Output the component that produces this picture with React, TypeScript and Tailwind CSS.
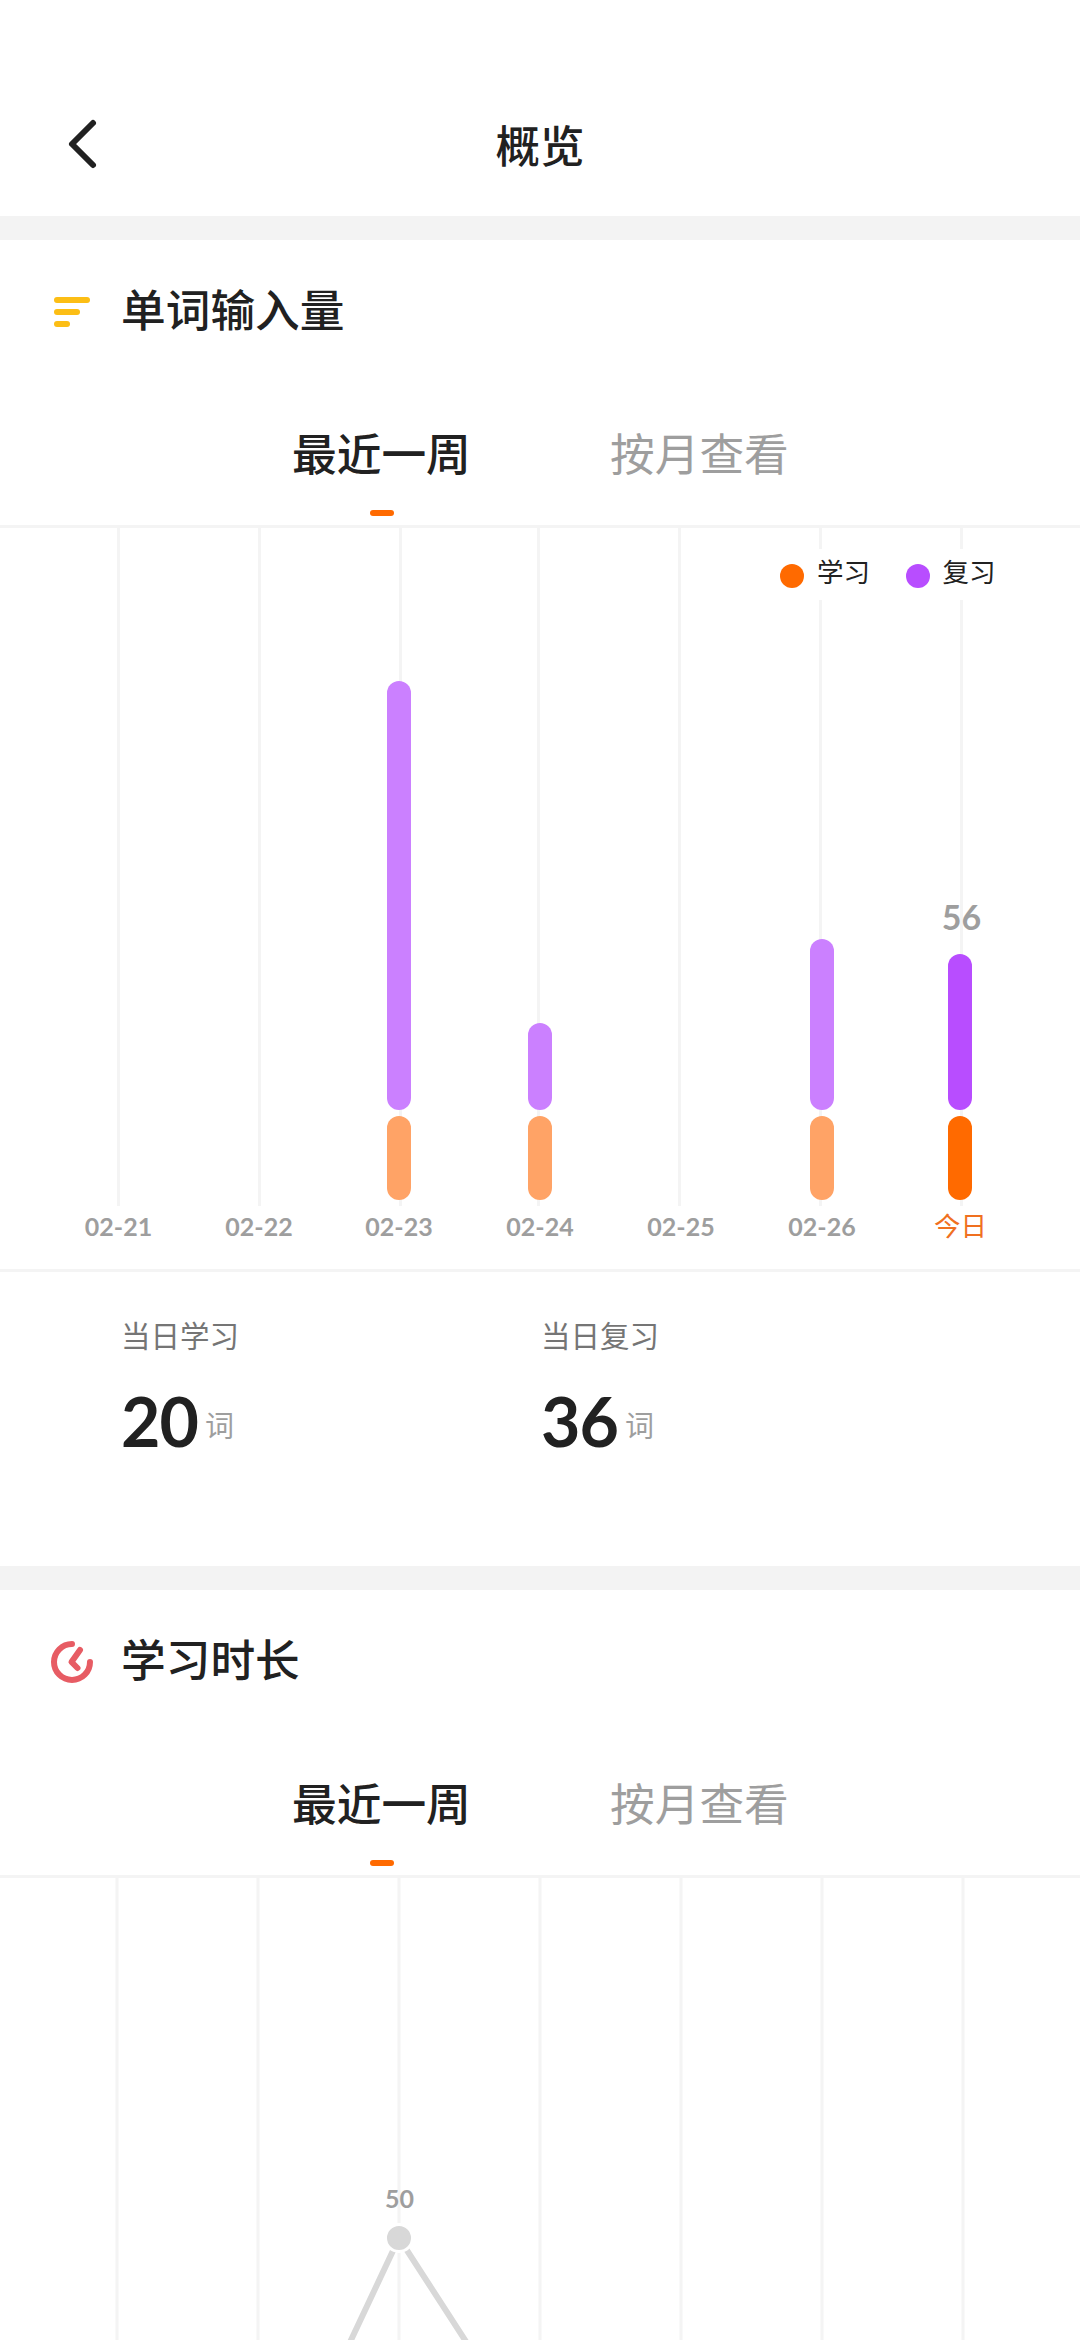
import type { ReactNode } from 'react';

type DayStat = {
  label: string;
  grid: number;
  bar: number;
  learned: number;
  reviewed: number;
  today?: boolean;
};

// grid / bar: centre positions on the x axis, learned / reviewed: bar heights
const days: DayStat[] = [
  { label: '02-21', grid: 118.5, bar: 118.5, learned: 0, reviewed: 0 },
  { label: '02-22', grid: 259.5, bar: 259, learned: 0, reviewed: 0 },
  { label: '02-23', grid: 400.5, bar: 399, learned: 84, reviewed: 429 },
  { label: '02-24', grid: 538.5, bar: 540, learned: 84, reviewed: 87 },
  { label: '02-25', grid: 679.5, bar: 681, learned: 0, reviewed: 0 },
  { label: '02-26', grid: 820.5, bar: 822, learned: 84, reviewed: 171 },
  { label: '今日', grid: 961.5, bar: 960, learned: 84, reviewed: 156, today: true },
];

const durationColumns = [117, 258, 399, 540, 681, 822, 963];

function Tabs() {
  return (
    <div className="flex h-[165px] justify-center gap-[140px] border-b-[3px] border-[#f4f4f4] pt-[56px] text-[44.7px] leading-[66px] font-medium">
      <button type="button" className="flex w-[178px] flex-col text-[#212121]">
        <span className="whitespace-nowrap">最近一周</span>
        <span className="mt-[25px] ml-[78px] h-[6px] w-[24px] rounded-[3px] bg-[#ff6a00]" />
      </button>
      <button type="button" className="flex w-[178px] flex-col font-normal text-[#9e9e9e]">
        <span className="whitespace-nowrap">按月查看</span>
      </button>
    </div>
  );
}

function Section({ icon, title, children }: { icon: ReactNode; title: string; children: ReactNode }) {
  return (
    <section className="border-t-[24px] border-[#f3f3f3]">
      <div className="flex h-[123px] items-start gap-[25px] pt-[35px] pl-[48px]">
        {icon}
        <h2 className="text-[44.7px] leading-[66px] font-medium">{title}</h2>
      </div>
      {children}
    </section>
  );
}

function WordsIcon() {
  return (
    <svg width="48" height="48" viewBox="0 0 48 48" className="mt-[13px]" fill="#fcbe15">
      <rect x="6" y="9" width="36" height="6" rx="3" />
      <rect x="6" y="21" width="26" height="6" rx="3" />
      <rect x="6" y="33" width="16" height="6" rx="3" />
    </svg>
  );
}

function DurationIcon() {
  return (
    <svg
      width="48"
      height="48"
      viewBox="0 0 48 48"
      className="mt-[13px]"
      fill="none"
      stroke="#e75c64"
      strokeWidth="6"
      strokeLinecap="round"
      strokeLinejoin="round"
    >
      <path d="M24 6A18 18 0 1 0 42 24" />
      <path d="M32 12L23.5 24L29.5 30" />
    </svg>
  );
}

function WordsChart() {
  return (
    <svg width="1080" height="741" viewBox="0 528 1080 741" className="block">
      {days.map((day) => (
        <rect key={day.label} x={day.grid - 1.5} y="528" width="3" height="678" fill="#f4f4f4" />
      ))}

      <rect x="765" y="549" width="252" height="51" fill="#fff" />
      <circle cx="792" cy="576" r="12" fill="#ff6a00" />
      <text x="817" y="581.5" fontSize="26.5" fill="#212121">
        学习
      </text>
      <circle cx="918" cy="576" r="12" fill="#b84dff" />
      <text x="942.5" y="581.5" fontSize="26.5" fill="#212121">
        复习
      </text>

      {days.map((day) => (
        <g key={day.label}>
          {day.reviewed > 0 ? (
            <rect
              x={day.bar - 12}
              y={1110 - day.reviewed}
              width="24"
              height={day.reviewed}
              rx="12"
              fill={day.today ? '#b84dff' : '#cb80ff'}
            />
          ) : null}
          {day.learned > 0 ? (
            <rect
              x={day.bar - 12}
              y={1200 - day.learned}
              width="24"
              height={day.learned}
              rx="12"
              fill={day.today ? '#ff6a00' : '#ffa366'}
            />
          ) : null}
          {day.today ? (
            <text x="960.5" y="1236" fontSize="26.5" textAnchor="middle" fill="#f0701f">
              {day.label}
            </text>
          ) : (
            <text
              x={day.bar}
              y="1236"
              fontSize="25"
              textAnchor="middle"
              fill="#9e9e9e"
              className="font-['Lato'] font-bold"
            >
              {day.label}
            </text>
          )}
        </g>
      ))}
      <text x="961.5" y="930" fontSize="34" textAnchor="middle" fill="#9e9e9e" className="font-['Lato'] font-bold">
        56
      </text>
    </svg>
  );
}

function DurationChart() {
  return (
    <svg width="1080" height="462" viewBox="0 1878 1080 462" className="block">
      {durationColumns.map((x) => (
        <rect key={x} x={x - 1.5} y="1878" width="3" height="462" fill="#f4f4f4" />
      ))}
      <path d="M258 2538L399 2238L540 2456" fill="none" stroke="#d8d8d8" strokeWidth="6" />
      <circle cx="399" cy="2238" r="13.5" fill="#d8d8d8" stroke="#fff" strokeWidth="3" />
      <text x="399.5" y="2207.5" fontSize="25" textAnchor="middle" fill="#9e9e9e" className="font-['Lato'] font-bold">
        50
      </text>
    </svg>
  );
}

function Stat({ label, value }: { label: string; value: number }) {
  return (
    <div className="w-[420px]">
      <p className="text-[29.5px] leading-[44px] text-[#757575]">{label}</p>
      <div className="mt-[20px] flex h-[90px] items-start gap-[7px]">
        <span className="font-['Lato'] text-[68px] leading-[90px] font-bold tracking-[-1px]">{value}</span>
        <span className="pt-[26px] text-[29px] leading-[44px] text-[#9e9e9e]">词</span>
      </div>
    </div>
  );
}

export default function App() {
  return (
    <main className="h-[2340px] w-[1080px] overflow-hidden bg-white font-['Noto_Sans_CJK_SC',sans-serif] text-[#212121]">
      <header className="grid h-[216px] grid-cols-3 items-start pt-[108px]">
        <button type="button" aria-label="返回" className="ml-[60px] w-[48px]">
          <svg
            width="48"
            height="72"
            viewBox="0 0 48 72"
            fill="none"
            stroke="#212121"
            strokeWidth="6"
            strokeLinecap="round"
            strokeLinejoin="round"
          >
            <path d="M33 15L12 36L33 57" />
          </svg>
        </button>
        <h1 className="pt-[3px] text-center text-[44.5px] leading-[66px] font-medium">概览</h1>
      </header>

      <Section icon={<WordsIcon />} title="单词输入量">
        <Tabs />
        <WordsChart />
        <div className="flex h-[297px] border-t-[3px] border-[#f4f4f4] pt-[40px] pl-[121px]">
          <Stat label="当日学习" value={20} />
          <Stat label="当日复习" value={36} />
        </div>
      </Section>

      <Section icon={<DurationIcon />} title="学习时长">
        <Tabs />
        <DurationChart />
      </Section>
    </main>
  );
}
